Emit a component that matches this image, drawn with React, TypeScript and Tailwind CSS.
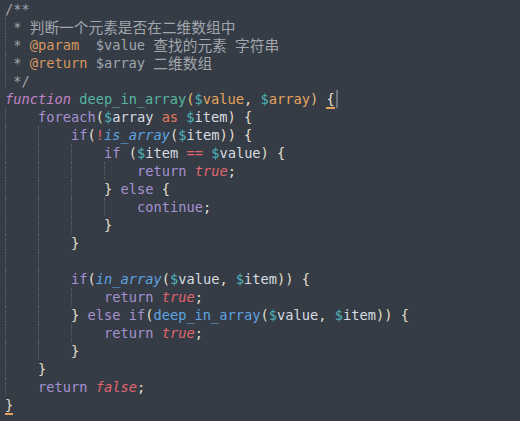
import React from 'react';

type Tok = [string, string];

const C = {
    cm: 'text-[#a2a6ad]',
    tag: 'text-[#d9975f]',
    kw: 'text-[#a591d0]',
    fn: 'italic text-[#c283c4]',
    def: 'text-[#56b5a0]',
    dol: 'text-[#4fb0b8]',
    par: 'text-[#e8a35c]',
    v: 'text-[#d8dbe0]',
    p: 'text-[#e4dfcc]',
    y: 'text-[#e5c07b]',
    as: 'text-[#e3795c]',
    op: 'text-[#e0656f]',
    bi: 'italic text-[#5fa3e0]',
    call: 'text-[#5fa3e0]',
    lit: 'italic text-[#e0656f]',
    cjk: 'inline-block h-[18px] align-top leading-[18px] text-[#a2a6ad] text-[14.7px] font-["Noto_Sans_CJK_SC",sans-serif]',
};

type Line = { ind: number; c?: boolean; toks: Tok[]; brace?: boolean; cursor?: boolean };

const lines: Line[] = [
    { ind: 0, toks: [['/**', C.cm]] },
    { ind: 0, c: true, toks: [['* ', C.cm], ['判断一个元素是否在二维数组中', C.cjk]] },
    { ind: 0, c: true, toks: [['* ', C.cm], ['@param', C.tag], ['  $value ', C.cm], ['查找的元素', C.cjk], [' ', C.cm], ['字符串', C.cjk]] },
    { ind: 0, c: true, toks: [['* ', C.cm], ['@return', C.tag], [' $array ', C.cm], ['二维数组', C.cjk]] },
    { ind: 0, c: true, toks: [['*/', C.cm]] },
    {
        ind: 0, cursor: true,
        toks: [['function', C.fn], [' ', C.v], ['deep_in_array', C.def], ['(', C.y], ['$', C.dol], ['value', C.par], [', ', C.p], ['$', C.dol], ['array', C.par], [') ', C.y]],
    },
    { ind: 1, toks: [['foreach', C.kw], ['(', C.p], ['$', C.dol], ['array', C.v], [' as ', C.as], ['$', C.dol], ['item', C.v], [') {', C.p]] },
    { ind: 2, toks: [['if', C.kw], ['(', C.p], ['!', C.op], ['is_array', C.bi], ['(', C.p], ['$', C.dol], ['item', C.v], [')) {', C.p]] },
    { ind: 3, toks: [['if', C.kw], [' (', C.p], ['$', C.dol], ['item', C.v], [' == ', C.op], ['$', C.dol], ['value', C.v], [') {', C.p]] },
    { ind: 4, toks: [['return', C.kw], [' ', C.v], ['true', C.lit], [';', C.p]] },
    { ind: 3, toks: [['} ', C.p], ['else', C.kw], [' {', C.p]] },
    { ind: 4, toks: [['continue', C.kw], [';', C.p]] },
    { ind: 3, toks: [['}', C.p]] },
    { ind: 2, toks: [['}', C.p]] },
    { ind: 2, toks: [] },
    { ind: 2, toks: [['if', C.kw], ['(', C.p], ['in_array', C.bi], ['(', C.p], ['$', C.dol], ['value', C.v], [', ', C.p], ['$', C.dol], ['item', C.v], [')) {', C.p]] },
    { ind: 3, toks: [['return', C.kw], [' ', C.v], ['true', C.lit], [';', C.p]] },
    { ind: 2, toks: [['} ', C.p], ['else if', C.kw], ['(', C.p], ['deep_in_array', C.call], ['(', C.p], ['$', C.dol], ['value', C.v], [', ', C.p], ['$', C.dol], ['item', C.v], [')) {', C.p]] },
    { ind: 3, toks: [['return', C.kw], [' ', C.v], ['true', C.lit], [';', C.p]] },
    { ind: 2, toks: [['}', C.p]] },
    { ind: 1, toks: [['}', C.p]] },
    { ind: 1, toks: [['return', C.kw], [' ', C.v], ['false', C.lit], [';', C.p]] },
    { ind: 0, brace: true, toks: [] },
];

function CodeLine({ line }: { line: Line }) {
    return (
        <div className="flex h-[18px] items-stretch whitespace-pre pl-[5px]">
            {line.c && (
                <span className="inline-block w-[8.25px] border-l border-dotted border-[#5d636d]" />
            )}
            {Array.from({ length: line.ind }).map((_, i) => (
                <span key={i} className="inline-block w-[33px] shrink-0 border-l border-dotted border-[#5d636d]" />
            ))}
            <span>
                {line.toks.map(([text, cls], i) => (
                    <span key={i} className={cls}>{text}</span>
                ))}
                {(line.cursor || line.brace) && (
                    <span className="text-[#e4dfcc] border-b-2 border-[#e5a55c]">
                        {line.brace ? '}' : '{'}
                    </span>
                )}
            </span>
            {line.cursor && <span className="ml-px inline-block w-[2px] bg-[#6f747c]" />}
        </div>
    );
}

export default function App() {
    return (
        <div className="min-h-screen w-full overflow-hidden bg-[#353c45] font-['DejaVu_Sans_Mono','Noto_Sans_CJK_SC',monospace] text-[13.7px] leading-[18px]">
            {lines.map((line, i) => (
                <CodeLine key={i} line={line} />
            ))}
        </div>
    );
}
